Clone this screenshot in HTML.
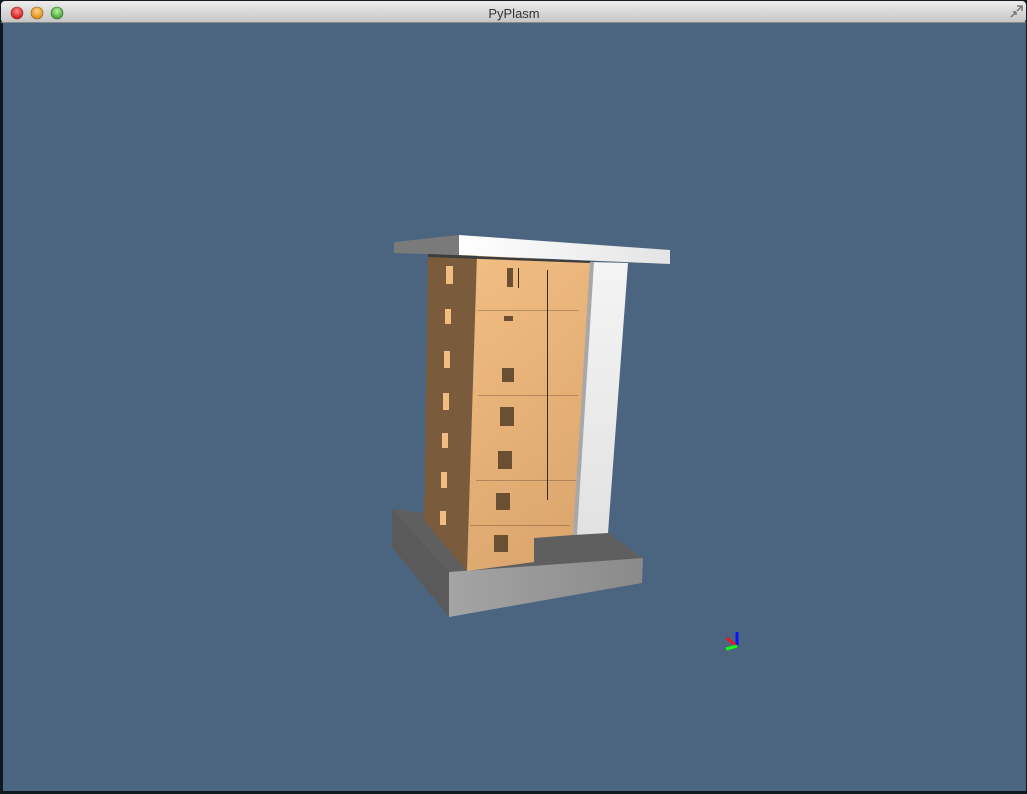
<!DOCTYPE html>
<html><head><meta charset="utf-8"><style>
html,body{margin:0;padding:0;background:#0f1a20;}
body{width:1027px;height:794px;overflow:hidden;position:relative;font-family:"Liberation Sans",sans-serif;}
</style></head><body>
<svg width="1027" height="794" viewBox="0 0 1027 794" xmlns="http://www.w3.org/2000/svg" style="position:absolute;left:0;top:0">
<defs>
<linearGradient id="tb" x1="0" y1="0" x2="0" y2="1"><stop offset="0" stop-color="#ececec"/><stop offset="1" stop-color="#c4c4c4"/></linearGradient>
<linearGradient id="fr" x1="0" y1="0" x2="0.3" y2="1"><stop offset="0" stop-color="#f2bd82"/><stop offset="1" stop-color="#dda86f"/></linearGradient>
<linearGradient id="wall" x1="0" y1="0" x2="0" y2="1"><stop offset="0" stop-color="#f4f4f4"/><stop offset="1" stop-color="#e2e2e2"/></linearGradient>
<linearGradient id="roof" x1="0" y1="0" x2="1" y2="0"><stop offset="0" stop-color="#ffffff"/><stop offset="1" stop-color="#e4e4e4"/></linearGradient>
<linearGradient id="bf" x1="0" y1="0" x2="1" y2="0"><stop offset="0" stop-color="#a4a4a4"/><stop offset="1" stop-color="#8a8a8a"/></linearGradient>
<radialGradient id="r" cx="0.5" cy="0.35" r="0.6"><stop offset="0" stop-color="#ff8a8a"/><stop offset="1" stop-color="#d01818"/></radialGradient>
<radialGradient id="o" cx="0.5" cy="0.35" r="0.6"><stop offset="0" stop-color="#ffd28a"/><stop offset="1" stop-color="#e08a10"/></radialGradient>
<radialGradient id="g" cx="0.5" cy="0.35" r="0.6"><stop offset="0" stop-color="#b8f0a0"/><stop offset="1" stop-color="#40a030"/></radialGradient>
</defs>
<rect x="0" y="0" width="1027" height="794" fill="#0f1a20"/>
<rect x="3" y="22" width="1023" height="769" fill="#4b6580"/>
<rect x="1" y="1" width="1025" height="22" rx="4" fill="url(#tb)"/>
<line x1="1" y1="22.5" x2="1026" y2="22.5" stroke="#8a8a8a"/>
<circle cx="17" cy="13" r="6" fill="url(#r)" stroke="#8a3030" stroke-width="0.6"/>
<circle cx="37" cy="13" r="6" fill="url(#o)" stroke="#8a6020" stroke-width="0.6"/>
<circle cx="57" cy="13" r="6" fill="url(#g)" stroke="#307020" stroke-width="0.6"/>
<text x="514" y="18" font-size="13" text-anchor="middle" fill="#333" font-family="Liberation Sans, sans-serif">PyPlasm</text>
<path d="M1011 17 l5 -5 M1016 12 h-3 M1016 12 v3 M1022 6 l-5 5 M1017 6 h5 v5" stroke="#777" stroke-width="1.5" fill="none"/>

<!-- base -->
<polygon points="392,509 608,533 643,558 449,572" fill="#5f5f5f"/>
<polygon points="449,572 643,558 642,583 449,617" fill="url(#bf)"/>
<polygon points="392,509 449,572 449,617 392,547" fill="#5a5a5a"/>
<!-- white wall -->
<polygon points="590,262 628,263 608,533 573,535" fill="url(#wall)"/>
<polygon points="590,262 594,262 577,535 573,535" fill="#a8a8a8"/>
<!-- dark side -->
<polygon points="428,255 477,255 467,571 424,520" fill="#7a5c3c"/>
<!-- front -->
<polygon points="477,255 590,262 573,535 534,538 534,562 467,571" fill="url(#fr)"/>
<!-- roof -->
<polygon points="394,242 459,235 459,255 394,253" fill="#7a7a7a"/>
<polygon points="459,235 670,250 670,264 459,255" fill="url(#roof)"/>
<polygon points="428,254 590,261 590,263 428,257" fill="#3c3c3c"/>
<!-- side windows -->
<g fill="#f2bd82">
<rect x="446" y="266" width="7" height="18"/><rect x="445" y="309" width="6" height="15"/>
<rect x="444" y="351" width="6" height="17"/><rect x="443" y="393" width="6" height="17"/>
<rect x="442" y="433" width="6" height="15"/><rect x="441" y="472" width="6" height="16"/>
<rect x="440" y="511" width="6" height="14"/>
</g>
<!-- front windows -->
<g fill="#6b4f33">
<rect x="507" y="268" width="6" height="19"/><rect x="504" y="316" width="9" height="5"/>
<rect x="502" y="368" width="12" height="14"/><rect x="500" y="407" width="14" height="19"/>
<rect x="498" y="451" width="14" height="18"/><rect x="496" y="493" width="14" height="17"/>
<rect x="494" y="535" width="14" height="17"/>
</g>
<g fill="#3a2a1a">
<rect x="518" y="268" width="1" height="20"/><rect x="547" y="270" width="1" height="230"/>
<rect x="478" y="310" width="100" height="1" opacity="0.3"/><rect x="478" y="395" width="100" height="1" opacity="0.3"/>
<rect x="476" y="480" width="100" height="1" opacity="0.3"/><rect x="470" y="525" width="100" height="1" opacity="0.3"/>
</g>
<!-- axes -->
<line x1="737" y1="632" x2="737" y2="645" stroke="#1010ff" stroke-width="3"/>
<line x1="727" y1="638" x2="735" y2="645" stroke="#ff1010" stroke-width="2.5"/>
<line x1="726" y1="649" x2="737" y2="646" stroke="#10ff10" stroke-width="3"/>
</svg>
</body></html>
